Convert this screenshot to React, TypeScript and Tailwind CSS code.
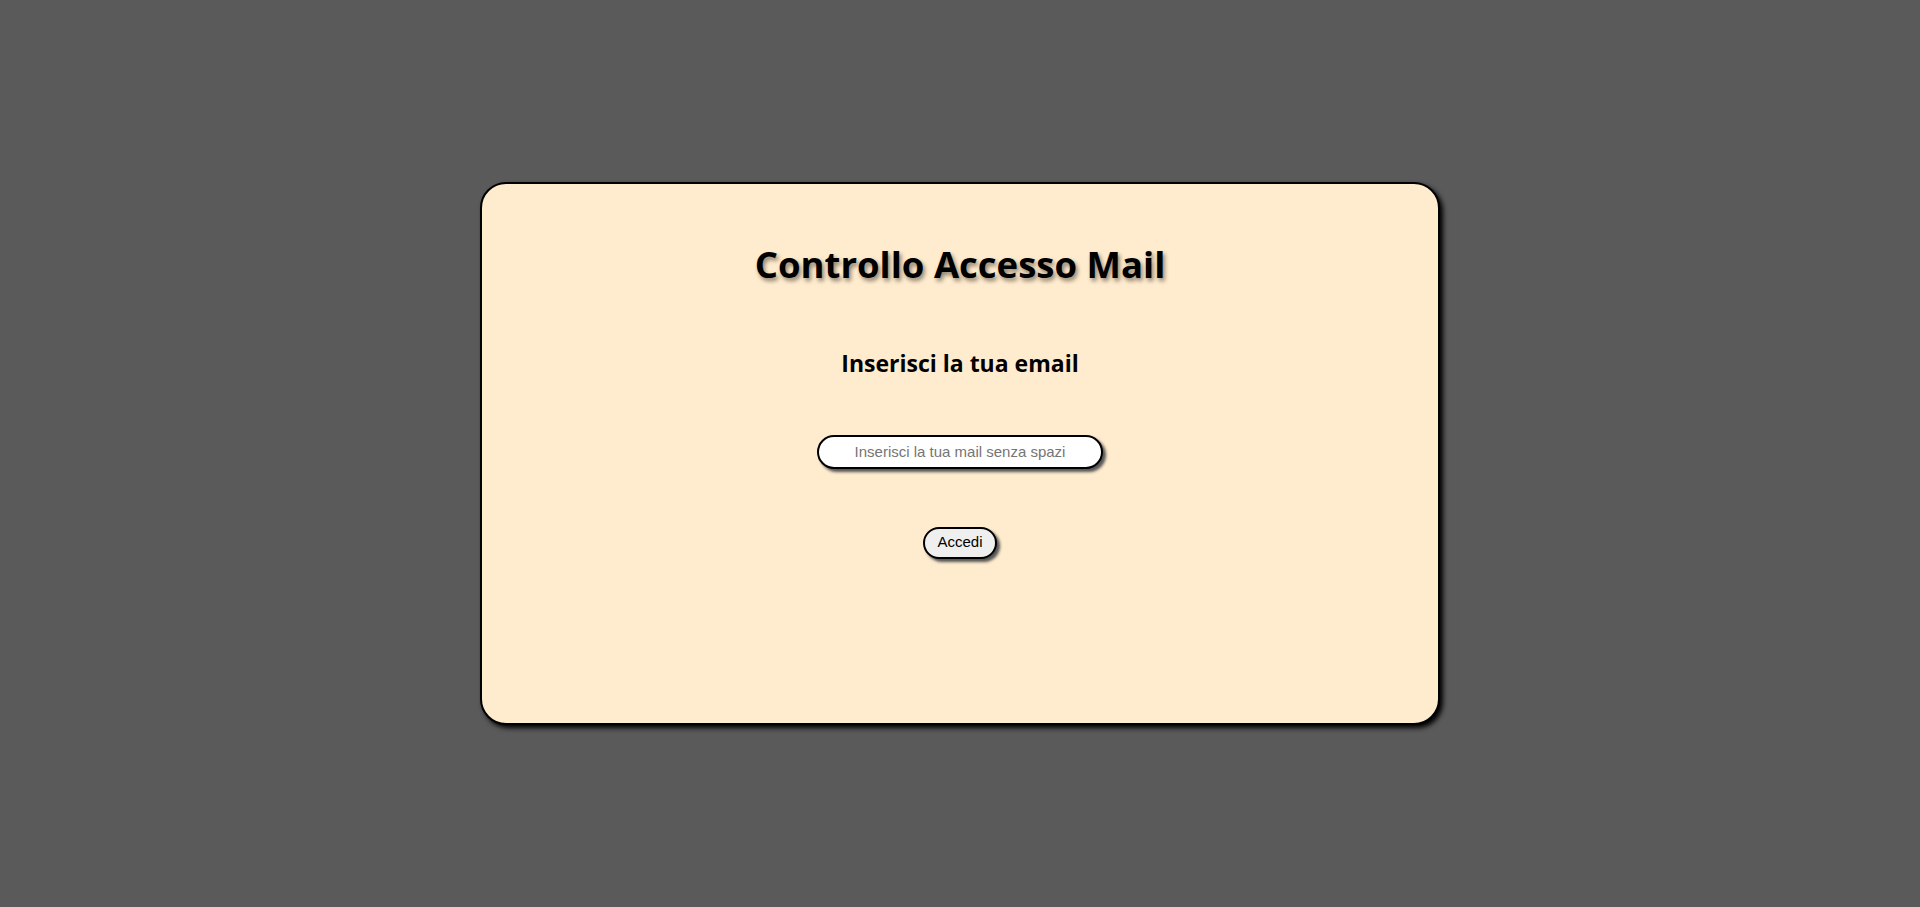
import React, { useState } from "react";

const App = () => {
  const [email, setEmail] = useState("");

  return (
    <div className="min-h-screen w-full bg-[#5a5a5a] flex items-center justify-center">
      {/* Card */}
      <div className="w-[960px] h-[543px] bg-[#ffebcd] border-2 border-black rounded-[26px] shadow-[3px_3px_5px_#000] flex flex-col items-center pt-[62px] font-['Open_Sans',sans-serif]">
        <h1 className="text-[36.5px] leading-none font-bold text-black [text-shadow:2px_3px_4px_rgba(0,0,0,0.45)]">
          Controllo Accesso Mail
        </h1>

        <h2 className="mt-[69px] text-[23px] leading-none font-bold text-black">
          Inserisci la tua email
        </h2>

        <input
          type="email"
          value={email}
          onChange={(e) => setEmail(e.target.value)}
          placeholder="Inserisci la tua mail senza spazi"
          className="mt-[60px] w-[286px] h-[34px] bg-white border-2 border-black rounded-full text-center text-[15px] text-black placeholder:text-[#757575] shadow-[3px_3px_3px_#555] outline-none font-['Liberation_Sans',Arial,sans-serif]"
        />

        <button className="mt-[58px] h-[32px] px-[12px] bg-[#efefef] border-2 border-black rounded-full text-[15px] text-black shadow-[3px_3px_3px_#555] font-['Liberation_Sans',Arial,sans-serif]">
          Accedi
        </button>
      </div>
    </div>
  );
};

export default App;
